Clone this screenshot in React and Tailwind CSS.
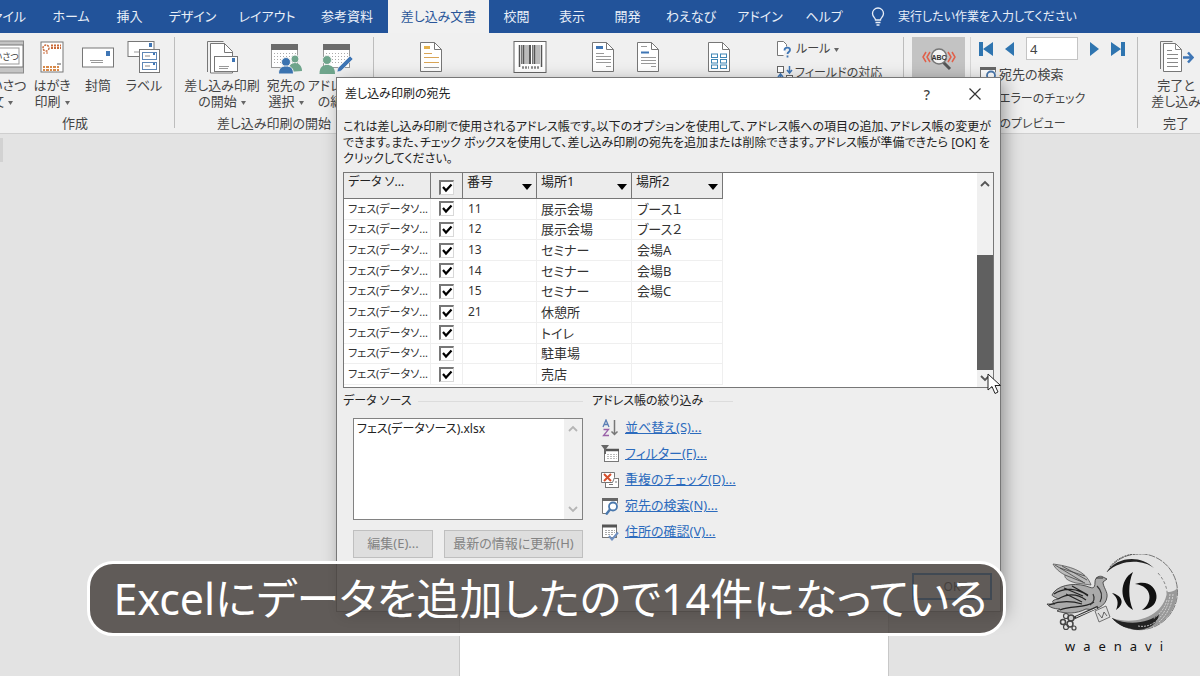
import React, { useState } from "react";

const tabs = [
  { label: "ファイル", width: "w-[40px]", align: "justify-end pr-[14px]" },
  { label: "ホーム", width: "w-[62px]" },
  { label: "挿入", width: "w-[55px]" },
  { label: "デザイン", width: "w-[71px]" },
  { label: "レイアウト", width: "w-[78px]" },
  { label: "参考資料", width: "w-[82px]" },
  { label: "差し込み文書", width: "w-[101px]", active: true },
  { label: "校閲", width: "w-[55px]" },
  { label: "表示", width: "w-[56px]" },
  { label: "開発", width: "w-[55px]" },
  { label: "わえなび", width: "w-[72px]" },
  { label: "アドイン", width: "w-[66px]" },
  { label: "ヘルプ", width: "w-[62px]" },
];

const initialRows = [
  { id: 1, number: "11", place1: "展示会場", place2: "ブース１" },
  { id: 2, number: "12", place1: "展示会場", place2: "ブース２" },
  { id: 3, number: "13", place1: "セミナー", place2: "会場A" },
  { id: 4, number: "14", place1: "セミナー", place2: "会場B" },
  { id: 5, number: "15", place1: "セミナー", place2: "会場C" },
  { id: 6, number: "21", place1: "休憩所", place2: "" },
  { id: 7, number: "", place1: "トイレ", place2: "" },
  { id: 8, number: "", place1: "駐車場", place2: "" },
  { id: 9, number: "", place1: "売店", place2: "" },
];

const Svg = ({ w, h, children }) => (
  <svg
    width={w}
    height={h}
    viewBox={`0 0 ${w} ${h}`}
    fill="none"
    className="shrink-0"
    aria-hidden="true"
  >
    {children}
  </svg>
);

const GreetingIcon = () => (
  <Svg w={44} h={34}>
    <rect x="0.5" y="1" width="43" height="32" fill="#c4c4c4" stroke="#8a8a8a" />
    <rect x="1" y="5" width="42" height="22" fill="#fff" stroke="#777" />
    <rect x="5" y="8" width="34" height="16" fill="#fff" stroke="#999" />
    <text x="5" y="20" fontSize="9" fill="#444">
      あいさつ
    </text>
  </Svg>
);

const PostcardIcon = () => (
  <Svg w={26} h={34}>
    <rect x="2" y="2" width="22" height="30" fill="#fff" stroke="#777" />
    <circle cx="7" cy="8" r="3" stroke="#c96a3a" strokeWidth="1.500" strokeDasharray="2 1" />
    <path d="M4 13h5" stroke="#c96a3a" strokeDasharray="2 1" />
    <path d="M12 5.500h10M12 8h10" stroke="#c96a3a" strokeWidth="2" strokeDasharray="2 1" />
    <path d="M18 24h4" stroke="#555" />
    <path d="M4 27h17M4 30h17" stroke="#d88a4a" strokeWidth="2" strokeDasharray="2 1 3 1" />
  </Svg>
);

const EnvelopeIcon = () => (
  <Svg w={34} h={34}>
    <rect x="1.500" y="8" width="31" height="19" fill="#fff" stroke="#777" />
    <rect x="25" y="11" width="4" height="5" fill="#3f76b5" />
    <path d="M9 20.500h13M10 22.500h12" stroke="#999" />
  </Svg>
);

const LabelIcon = () => (
  <Svg w={34} h={34}>
    <rect x="1" y="1.500" width="26" height="15" fill="#fff" stroke="#777" />
    <rect x="22" y="3" width="3" height="4" fill="#3f76b5" />
    <path d="M7 12h6" stroke="#999" />
    <rect x="12.500" y="9.500" width="20" height="23" fill="#fff" stroke="#777" />
    <rect x="15.500" y="12.500" width="14" height="7" stroke="#5d86b5" />
    <rect x="15.500" y="22.500" width="14" height="7" stroke="#5d86b5" />
    <path d="M18 16h5M18 26h5" stroke="#888" />
    <path d="M27 13v2M27 23v2" stroke="#3f76b5" strokeWidth="2" />
  </Svg>
);

const StartMergeIcon = () => (
  <Svg w={34} h={34}>
    <path d="M2.500 32V1.500h16" stroke="#777" />
    <path d="M5.500 33V3.500h14l8 8V33z" fill="#fff" stroke="#777" />
    <path d="M19.500 3.500v9h8" stroke="#777" />
    <rect x="9.500" y="16.500" width="23" height="15" fill="#fff" stroke="#777" />
    <rect x="27" y="18" width="3" height="4" fill="#3f76b5" />
    <path d="M14 26.500h10M14 28.500h9" stroke="#999" />
  </Svg>
);

const Sheet = ({ x = 2 }) => (
  <>
    <rect x={x + 0.5} y="4.500" width="26" height="23" fill="#fff" stroke="#999" />
    <rect x={x} y="4" width="27" height="6" fill="#6b6b6b" />
    <path
      d={`M${x + 3} 13.500h22M${x + 3} 16.500h22M${x + 3} 19.500h22M${x + 3} 22.500h22`}
      stroke="#aaa"
      strokeDasharray="1 2"
    />
  </>
);

const SelectRecipientsIcon = () => (
  <Svg w={34} h={34}>
    <Sheet x={2} />
    <circle cx="26" cy="19" r="4" fill="#6fa58c" stroke="#f0f0f0" />
    <path d="M19 32c0-6 3-9 7-9s7 3 7 8z" fill="#6fa58c" />
    <circle cx="17" cy="22" r="4.500" fill="#3b73b0" stroke="#f0f0f0" />
    <path d="M9.500 34c0-6 3-8 7.500-8s7.500 2 7.500 8z" fill="#3b73b0" stroke="#f0f0f0" />
  </Svg>
);

const EditRecipientsIcon = () => (
  <Svg w={36} h={34}>
    <Sheet x={4} />
    <circle cx="8" cy="20" r="4.500" fill="#6fa58c" stroke="#f0f0f0" />
    <path d="M0.500 34c0-7 3-9 7.500-9s8 2 8 9z" fill="#6fa58c" />
    <path d="M31 16l3 3-12 12-4 1 1-4z" fill="#3f76b5" stroke="#f0f0f0" strokeWidth="0.600" />
  </Svg>
);

const DocIcon = ({ children }) => (
  <Svg w={26} h={34}>
    <path d="M2.500 2.500h14l7 7v22h-21z" fill="#fff" stroke="#777" />
    <path d="M16.500 2.500v7h7" stroke="#777" />
    {children}
  </Svg>
);

const HighlightIcon = () => (
  <DocIcon>
    <path d="M6 7.500h6" stroke="#e5b24d" strokeWidth="3" />
    <path d="M6 13.500h8M6 17.500h15M6 22.500h15" stroke="#d9a557" />
    <path d="M6 27.500h15" stroke="#999" />
  </DocIcon>
);

const AddressBlockIcon = () => (
  <DocIcon>
    <path d="M6 7.500h7" stroke="#3f76b5" strokeWidth="3" />
    <path d="M6 13.500h8M6 16.500h15M6 19.500h15M6 22.500h15M16 26.500h5" stroke="#999" />
  </DocIcon>
);

const GreetingLineIcon = () => (
  <DocIcon>
    <path d="M6 12.500h8" stroke="#3f76b5" strokeWidth="2" />
    <path d="M6 6.500h6M6 17.500h15M6 20.500h15M6 23.500h15M16 26.500h5" stroke="#999" />
  </DocIcon>
);

const MergeFieldIcon = () => (
  <DocIcon>
    {[14, 19.5, 25].map((y) => (
      <g key={y} stroke="#3f86b5">
        <rect x="5.500" y={y} width="6" height="3.500" />
        <rect x="14.500" y={y} width="6" height="3.500" />
      </g>
    ))}
  </DocIcon>
);

const BarcodeIcon = () => (
  <Svg w={34} h={34}>
    <rect x="1" y="1.500" width="32" height="31" fill="#fff" stroke="#666" />
    <path d="M6.500 5v22M28.500 5v22" stroke="#555" strokeWidth="1.500" />
    <path d="M10.500 5v19M17 5v19M21.500 5v19" stroke="#555" strokeWidth="2" />
    <path d="M8.500 5v19M13 5v19M15 5v19M19.500 5v19M24 5v19M26 5v19" stroke="#777" />
    <path d="M9 27.500h7M18 27.500h8" stroke="#888" strokeWidth="2.500" strokeDasharray="2 1" />
  </Svg>
);

const RulesIcon = () => (
  <Svg w={16} h={18}>
    <path d="M7.500 15.500h-6v-14h6l3 3v2" fill="#fff" stroke="#777" />
    <path d="M8.500 10.500c0-4 5.500-3.500 5.500-.5 0 2-2.500 2-2.500 4M11.500 15.500v2" stroke="#3f76b5" strokeWidth="1.800" />
  </Svg>
);

const MatchFieldsIcon = () => (
  <Svg w={18} h={16}>
    <rect x="1.500" y="1.500" width="6" height="6" fill="#fff" stroke="#666" />
    <rect x="10.500" y="10.500" width="6" height="5" fill="#fff" stroke="#666" />
    <path d="M13.500 1v6M11 5l2.500 3L16 5M4.500 15v-5M2 12l2.500-3L7 12" stroke="#3f76b5" strokeWidth="1.500" />
  </Svg>
);

const PreviewIcon = () => (
  <Svg w={36} h={30}>
    <path d="M5 7l-3 5 3 5M9 7l-3 5 3 5M27 7l3 5-3 5M31 7l3 5-3 5" stroke="#e0604a" strokeWidth="1.500" />
    <path d="M22 17l7 7" stroke="#555" strokeWidth="3" />
    <circle cx="18" cy="11.500" r="7.500" fill="#f4f4f4" stroke="#777" strokeWidth="1.500" />
    <text x="10.500" y="15" fontSize="7" fontWeight="700" fill="#333" fontFamily="Liberation Sans">
      ABC
    </text>
  </Svg>
);

const FindIcon = () => (
  <Svg w={18} h={18}>
    <path d="M6 16.500H1.500v-14h15v4" fill="#fff" stroke="#777" />
    <path d="M1 2.500h16" stroke="#666" strokeWidth="3" />
    <circle cx="12" cy="9.500" r="4" fill="#fff" stroke="#4a78ad" strokeWidth="1.800" />
    <path d="M9 12.500l-4 5" stroke="#4a78ad" strokeWidth="2.500" />
  </Svg>
);

const FinishIcon = () => (
  <Svg w={36} h={34}>
    <path d="M2.500 29V1.500h12" stroke="#777" />
    <path d="M5.500 31.500v-28h12l6 6v22z" fill="#fff" stroke="#777" />
    <path d="M17.500 3.500v6h6M9 10.500h5M9 14.500h11M9 18.500h11M9 22.500h11M9 26.500h11" stroke="#888" />
    <path d="M25 17.500h9M30 12.500l4.500 5-4.500 5" stroke="#3f76b5" strokeWidth="2.500" />
  </Svg>
);

const SortIcon = () => (
  <Svg w={18} h={18}>
    <path d="M2 8l3-7 3 7M3 5.500h4" stroke="#5b7fb5" strokeWidth="1.300" />
    <path d="M2.500 10.500h5l-5 6h5.500" stroke="#9a62a8" strokeWidth="1.300" />
    <path d="M13.500 1v14M10.500 12.500l3 3 3-3" stroke="#777" strokeWidth="1.500" />
  </Svg>
);

const FilterIcon = () => (
  <Svg w={18} h={18}>
    <rect x="3.500" y="4.500" width="14" height="12" fill="#fff" stroke="#777" />
    <path d="M4 5h14" stroke="#555" strokeWidth="2.500" />
    <path d="M6 9.500h10M6 11.500h10M6 13.500h10" stroke="#bbb" strokeDasharray="2 1" />
    <path d="M0 0h8L5 4v5H3V4z" fill="#666" />
  </Svg>
);

const DuplicateIcon = () => (
  <Svg w={18} h={18}>
    <rect x="4.500" y="7.500" width="13" height="9" fill="#fff" stroke="#777" />
    <path d="M8 13.500h4M15 10v2" stroke="#777" />
    <path d="M.5 1.500h13v5l-2 5H.500z" fill="#fff" stroke="#777" />
    <path d="M3 3l7 7M10 3l-7 7" stroke="#d5502e" strokeWidth="2" />
  </Svg>
);

const ValidateIcon = () => (
  <Svg w={18} h={18}>
    <rect x="1.500" y="2.500" width="14" height="12" fill="#fff" stroke="#777" />
    <path d="M1 3h15" stroke="#555" strokeWidth="3" />
    <path d="M4 7.500h10M4 9.500h10M4 11.500h8" stroke="#aaa" strokeDasharray="2 1" />
    <path d="M8 13l3 3.500 6-7" stroke="#6e8fc0" strokeWidth="2" />
  </Svg>
);

const Chevron = ({ up, color = "#555" }) => (
  <Svg w={10} h={8}>
    <path d={up ? "M1 6l4-4 4 4" : "M1 2l4 4 4-4"} stroke={color} strokeWidth="1.800" />
  </Svg>
);

const Caret = () => (
  <svg width="5" height="4" viewBox="0 0 5 4" className="ml-1 inline-block align-middle" aria-hidden="true">
    <path d="M0 0h5L2.500 4z" fill="#666" />
  </svg>
);

const BigButton = ({ width, icon, lines = [], caret, label }) => (
  <button
    type="button"
    aria-label={label}
    className={`${width} flex shrink-0 flex-col items-center pt-[3px]`}
  >
    {icon}
    <span className="mt-[3px] text-[13px] leading-4 whitespace-nowrap">
      {lines.map((line, i) => (
        <span key={line} className="block">
          {line}
          {caret && i === lines.length - 1 && <Caret />}
        </span>
      ))}
    </span>
  </button>
);

const Group = ({ width, title, children }) => (
  <section className={`${width} flex shrink-0 flex-col border-r border-[#bdbdbd]`}>
    <div className="flex h-[78px] shrink-0">{children}</div>
    <div className="text-center text-[13px] leading-4 whitespace-nowrap">{title}</div>
  </section>
);

const Tick = ({ checked, onChange, label }) => (
  <label className="relative block size-[15px]">
    <input
      type="checkbox"
      checked={checked}
      onChange={onChange}
      aria-label={label}
      className="peer block size-[15px] appearance-none border border-t-2 border-l-2 border-[#d8d8d8] border-t-[#777] border-l-[#777] bg-white"
    />
    <svg
      width="11"
      height="11"
      viewBox="0 0 11 11"
      fill="none"
      className="pointer-events-none absolute top-[3px] left-[3px] hidden peer-checked:block"
      aria-hidden="true"
    >
      <path d="M1 4l3 3.500L9.500 1.500" stroke="#000" strokeWidth="2.200" />
    </svg>
  </label>
);

const filterLinks = [
  { text: "並べ替え(S)...", icon: <SortIcon /> },
  { text: "フィルター(F)...", icon: <FilterIcon /> },
  { text: "重複のチェック(D)...", icon: <DuplicateIcon /> },
  { text: "宛先の検索(N)...", icon: <FindIcon /> },
  { text: "住所の確認(V)...", icon: <ValidateIcon /> },
];

const TabBar = () => (
  <nav className="flex h-[33px] shrink-0 bg-[#22539a] text-[13px] text-[#e9eff8]">
    {tabs.map((tab) => (
      <button
        key={tab.label}
        type="button"
        className={`${tab.width} ${tab.align || "justify-center"} flex shrink-0 items-center whitespace-nowrap ${
          tab.active ? "bg-[#f1f1f1] text-[#2a5699]" : ""
        }`}
      >
        {tab.label}
      </button>
    ))}
    <button type="button" className="ml-4 flex shrink-0 items-center gap-[13px] text-[12px] whitespace-nowrap">
      <Svg w={14} h={20}>
        <path
          d="M4.500 13c0-2-3-3-3-6.500a5.500 5.500 0 0 1 11 0c0 3.500-3 4.500-3 6.500zM4.500 15.500h5M5.500 18h3"
          stroke="#e9eff8"
          strokeWidth="1.300"
        />
      </Svg>
      実行したい作業を入力してください
    </button>
  </nav>
);

const Ribbon = () => (
  <div className="flex h-[101px] shrink-0 overflow-hidden border-b border-[#cfcfcf] bg-[#f0f0f0] pt-1 pb-[5px] text-[#444]">
    <Group width="w-[175px]" title={<span className="pr-6">作成</span>}>
      <div className="flex min-w-0 flex-1 justify-end pr-[7px]">
        <BigButton width="w-[54px]" icon={<GreetingIcon />} lines={["あいさつ", "文"]} caret />
        <BigButton width="w-[46px]" icon={<PostcardIcon />} lines={["はがき", "印刷"]} caret />
        <BigButton width="w-[46px]" icon={<EnvelopeIcon />} lines={["封筒"]} />
        <BigButton width="w-[46px]" icon={<LabelIcon />} lines={["ラベル"]} />
      </div>
    </Group>
    <Group width="w-[199px]" title="差し込み印刷の開始">
      <div className="flex pl-[7px]">
        <BigButton width="w-[80px]" icon={<StartMergeIcon />} lines={["差し込み印刷", "の開始"]} caret />
        <BigButton width="w-[48px]" icon={<SelectRecipientsIcon />} lines={["宛先の", "選択"]} caret />
        <BigButton width="w-[54px]" icon={<EditRecipientsIcon />} lines={["アドレス帳", "の編集"]} />
      </div>
    </Group>
    <Group width="w-[530px]">
      <BigButton width="w-[114px]" icon={<HighlightIcon />} label="差し込みフィールドの強調表示" />
      <BigButton width="w-[84px]" icon={<BarcodeIcon />} label="バーコード" />
      <BigButton width="w-[62px]" icon={<AddressBlockIcon />} label="住所ブロック" />
      <BigButton width="w-[28px]" icon={<GreetingLineIcon />} label="挨拶文" />
      <BigButton width="w-[114px]" icon={<MergeFieldIcon />} label="差し込みフィールドの挿入" />
      <div className="flex flex-col text-[12px] whitespace-nowrap">
        <button type="button" className="flex h-6 items-center gap-1">
          <RulesIcon />
          <span>
            ルール
            <Caret />
          </span>
        </button>
        <button type="button" className="flex h-6 items-center gap-px">
          <MatchFieldsIcon />
          フィールドの対応
        </button>
      </div>
    </Group>
    <Group width="w-[234px]" title={<span className="text-[12px]">結果のプレビュー</span>}>
      <button
        type="button"
        aria-label="結果のプレビュー"
        className="ml-2 flex w-[53px] shrink-0 justify-center bg-[#c3c3c3] pt-2"
      >
        <PreviewIcon />
      </button>
      <div className="ml-[5px] flex flex-col border-l border-[#d4d4d4] pl-2 text-[12px] whitespace-nowrap">
        <div className="flex h-[23px] items-center gap-3">
          <button type="button" aria-label="先頭">
            <Svg w={14} h={14}>
              <path d="M0 0h4v14H0zM14 0v14L4 7z" fill="#2f75b0" />
            </Svg>
          </button>
          <button type="button" aria-label="前へ">
            <Svg w={9} h={14}>
              <path d="M9 0v14L0 7z" fill="#2f75b0" />
            </Svg>
          </button>
          <input
            type="text"
            defaultValue="4"
            aria-label="レコード"
            className="h-[23px] w-[52px] border border-[#c4c4c4] bg-white px-[3px] text-[13px]"
          />
          <button type="button" aria-label="次へ">
            <Svg w={9} h={14}>
              <path d="M0 0v14l9-7z" fill="#2f75b0" />
            </Svg>
          </button>
          <button type="button" aria-label="最後">
            <Svg w={14} h={14}>
              <path d="M10 0h4v14h-4zM0 0v14l10-7z" fill="#2f75b0" />
            </Svg>
          </button>
        </div>
        <button type="button" className="flex h-[26px] items-center gap-0.5 pt-1 text-[13px]">
          <FindIcon />
          宛先の検索
        </button>
        <button type="button" className="flex h-[26px] items-center pl-5">
          エラーのチェック
        </button>
      </div>
    </Group>
    <section className="flex flex-1 flex-col items-start pl-2">
      <div className="flex h-[78px] shrink-0">
        <BigButton width="w-[60px]" icon={<FinishIcon />} lines={["完了と", "差し込み"]} />
      </div>
      <div className="w-[60px] text-center text-[13px] leading-4">完了</div>
    </section>
  </div>
);

const HeaderCell = ({ children, width, arrow }) => (
  <th
    className={`${width} h-[26px] border-r border-b border-[#777] bg-[#ececec] px-1 text-left align-top font-normal`}
  >
    <div className="flex items-end justify-between">
      <span className="leading-[17px]">{children}</span>
      {arrow && (
        <svg width="10" height="6" viewBox="0 0 10 6" className="shrink-0" aria-hidden="true">
          <path d="M0 0h10L5 6z" fill="#000" />
        </svg>
      )}
    </div>
  </th>
);

const RecipientsTable = () => {
  const [checked, setChecked] = useState(initialRows.map(() => true));

  const toggle = (index) => {
    setChecked(checked.map((value, i) => (i === index ? !value : value)));
  };

  const toggleAll = (e) => {
    setChecked(checked.map(() => e.target.checked));
  };

  return (
    <div className="mt-[5px] flex h-[216px] border border-[#777] bg-white">
      <div className="flex-1">
        <table className="h-[212px] w-[379px] table-fixed border-separate border-spacing-0 text-[13px] leading-4 whitespace-nowrap">
          <thead>
            <tr>
              <HeaderCell width="w-[87px]">
                <span className="text-[12px]">データ ソ...</span>
              </HeaderCell>
              <th className="w-[32px] border-r border-b border-[#777] bg-[#ececec] pt-1 pl-2">
                <Tick
                  checked={checked.every(Boolean)}
                  onChange={toggleAll}
                  label="すべて選択"
                />
              </th>
              <HeaderCell width="w-[74px]" arrow>番号</HeaderCell>
              <HeaderCell width="w-[95px]" arrow>場所1</HeaderCell>
              <HeaderCell width="w-[91px]" arrow>場所2</HeaderCell>
            </tr>
          </thead>
          <tbody className="text-[#333]">
            {initialRows.map((row, i) => (
              <tr key={row.id}>
                <td className="border-r border-b border-[#efefef] pl-1 text-[11px]">フェス(データソ...</td>
                <td className="border-r border-b border-[#efefef] pl-2">
                  <Tick
                    checked={checked[i]}
                    onChange={() => toggle(i)}
                    label={row.place1}
                  />
                </td>
                <td className="border-r border-b border-[#efefef] pl-[5px] text-[12px]">{row.number}</td>
                <td className="border-r border-b border-[#efefef] pl-1">{row.place1}</td>
                <td className="border-r border-b border-[#efefef] pl-[5px]">{row.place2}</td>
              </tr>
            ))}
          </tbody>
        </table>
      </div>
      <div className="flex w-4 flex-col items-center bg-[#f0f0f0]">
        <div className="flex h-[82px] pt-[7px]">
          <Chevron up />
        </div>
        <div className="h-[115px] w-full bg-[#606060]" />
        <div className="pt-1">
          <Chevron />
        </div>
      </div>
    </div>
  );
};

const Dialog = () => (
  <div
    role="dialog"
    aria-labelledby="dialog-title"
    className="absolute top-[77px] left-[336px] flex h-[535px] w-[665px] flex-col border border-[#777] bg-[#eeeeee] text-[12px] text-[#222] shadow-[4px_4px_16px_rgba(0,0,0,0.35)]"
  >
    <div className="flex h-8 shrink-0 items-center bg-white pl-2">
      <h1 id="dialog-title" className="flex-1">
        差し込み印刷の宛先
      </h1>
      <button type="button" className="w-12 text-center text-[14px] font-medium text-[#444]">?</button>
      <button type="button" aria-label="閉じる" className="mr-[1px] flex w-12 justify-center">
        <Svg w={12} h={12}>
          <path d="M0.500 0.500l11 11M11.500 0.500l-11 11" stroke="#333" strokeWidth="1.200" />
        </Svg>
      </button>
    </div>
    <div className="flex flex-1 flex-col px-1.5 pt-[9px]">
      <p className="leading-4 whitespace-nowrap">
        これは差し込み印刷で使用されるアドレス帳です。以下のオプションを使用して、アドレス帳への項目の追加、アドレス帳の変更が
        <br />
        できます。また、チェック ボックスを使用して、差し込み印刷の宛先を追加または削除できます。アドレス帳が準備できたら [OK] を
        <br />
        クリックしてください。
      </p>
      <RecipientsTable />
      <div className="mt-1 flex gap-[9px]">
        <div className="w-[240px]">
          <div className="flex h-[18px] items-center gap-1.5">
            <h2>データ ソース</h2>
            <span className="h-px flex-1 bg-[#dcdcdc]" />
          </div>
          <div className="mt-2 ml-[10px] flex h-[102px] border border-[#828282] bg-white">
            <ul role="listbox" className="flex-1 pl-[3px] leading-5">
              <li role="option" aria-selected="false">フェス(データソース).xlsx</li>
            </ul>
            <div className="flex w-[18px] flex-col items-center justify-between bg-[#f0f0f0] py-1.5">
              <Chevron up color="#b5b5b5" />
              <Chevron color="#b5b5b5" />
            </div>
          </div>
          <div className="mt-[10px] ml-[10px] flex gap-[11px] text-[13px] text-[#838383]">
            <button type="button" disabled className="h-7 w-20 border border-[#bfbfbf] bg-[#dedede]">
              編集(E)...
            </button>
            <button type="button" disabled className="h-7 flex-1 border border-[#bfbfbf] bg-[#dedede] whitespace-nowrap">
              最新の情報に更新(H)
            </button>
          </div>
        </div>
        <div>
          <div className="flex h-[18px] items-center gap-1.5">
            <h2>アドレス帳の絞り込み</h2>
            <span className="h-px w-6 bg-[#dcdcdc]" />
          </div>
          <ul className="mt-[5px] ml-[9px] text-[13px]">
            {filterLinks.map((link) => (
              <li key={link.text} className="flex h-[26px] items-center gap-[6px]">
                {link.icon}
                <a href="#" className="whitespace-nowrap text-[#2c6bbd] underline">
                  {link.text}
                </a>
              </li>
            ))}
          </ul>
        </div>
      </div>
      <div className="mt-auto flex justify-end pr-[2px] pb-[11px]">
        <button type="button" className="h-[27px] w-20 border-2 border-[#0067c0] bg-[#e1e1e1]">
          OK
        </button>
      </div>
    </div>
    {/* mouse pointer resting on the scroll bar */}
    <svg
      width="15"
      height="22"
      viewBox="0 0 15 22"
      className="absolute top-[295px] left-[650px]"
      aria-hidden="true"
    >
      <path d="M1 1v16l4-3.500 3 7 3-1.500-3-6.500h5.500z" fill="#fff" stroke="#222" />
    </svg>
  </div>
);

const WaenaviLogo = () => (
  <div className="absolute right-[18px] bottom-[22px] flex w-[136px] flex-col items-center text-[#111]">
    <svg width="136" height="84" viewBox="0 0 136 84" fill="none" aria-hidden="true">
      {/* ring */}
      <path d="M61 18A38 38 0 1 1 66 64" stroke="#777" strokeWidth="1" strokeDasharray="7 1" />
      <path d="M61 18C70 3 94 0 108 14C98 6 76 4 61 18z" fill="#222" />
      <path d="M64 13C72 2 86 -1 96 0" stroke="#555" strokeDasharray="2 1" />
      <path d="M112 19c9 10 11 22 8 30" stroke="#888" strokeDasharray="3 2" />
      <path d="M66 64C90 72 118 62 121 38C127 38 130 36 131 34A38 38 0 0 1 66 64z" fill="#999" />
      <path d="M66 64C84 73 104 68 113 60C112 70 103 75 92 76C82 75 72 72 66 64z" fill="#222" />
      <path d="M124 40c-1 12-7 22-16 29M127 40c-1 12-7 22-14 28M121 46c-2 8-8 15-14 19M92 72c6 1 12 0 17-4" stroke="#ddd" strokeWidth="0.800" strokeDasharray="2 1" />
      {/* mark */}
      <path d="M87 18C73 26 73 48 87 56C82 45 82 29 87 18z" fill="#111" />
      <path d="M89 30C112 22 120 54 96 56C107 49 107 32 89 30z" fill="#111" />
      <path d="M66 39C77 42 79 50 70 56C73 49 72 44 66 39z" fill="#111" />
      {/* bird: far wing, near wing, tail, body and head */}
      <path d="M7 10C22 12 40 16 45 31L30 29C22 27 18 24 19 21C13 18 9 14 7 10z" fill="#bbb" stroke="#555" strokeWidth="0.800" />
      <path d="M9 11l28 17M14 14l25 8M19 21l20 8M16 12l25 14" stroke="#444" strokeWidth="0.800" />
      <path d="M6 41C10 32 26 28 40 32C46 34 49 36 49 28C49 23 54 21 57 23L61 25L57 28C57 33 62 38 61 43C60 52 50 57 40 55C30 60 20 60 11 57L14 55C8 55 3 53 1 50L9 50C5 48 6 46 12 45C9 43 6 42 6 41z" fill="#aaa" stroke="#333" strokeWidth="0.800" />
      <path d="M8 40C18 33 32 34 42 42M12 45C22 39 32 40 40 46M3 51C16 46 26 47 36 50M14 56C26 51 38 55 48 48M18 34l19 8M26 32l16 9M20 40l16 8" stroke="#222" strokeWidth="1.200" />
      <path d="M51 32c5 5 6 10 3 16M47 40c2 4 1 8-3 11M50 24h7" stroke="#333" strokeWidth="1.200" />
      {/* key */}
      <path d="M28 64L52 53" stroke="#333" strokeWidth="3" />
      <path d="M30 63L51 54" stroke="#ddd" strokeWidth="1" />
      <path d="M49 57l11-5 4 11-11 5z" fill="#ddd" stroke="#555" strokeWidth="0.800" />
      <path d="M52 59l4 5 2-6 3 4" stroke="#444" strokeWidth="0.800" />
      <circle cx="25" cy="64" r="3" fill="#ccc" stroke="#444" strokeWidth="1.500" />
      <circle cx="20" cy="62" r="2.500" stroke="#444" strokeWidth="1.200" />
      <circle cx="17" cy="68" r="2.500" stroke="#444" strokeWidth="1.500" />
      <circle cx="24" cy="70" r="3" stroke="#444" strokeWidth="1.500" />
      <circle cx="20" cy="73" r="2.500" stroke="#444" strokeWidth="1.200" />
      <circle cx="28" cy="74" r="2" stroke="#444" strokeWidth="1.200" />
    </svg>
    <div className="flex w-[98px] justify-between font-['Noto_Sans'] text-[13px] leading-4">
      {"waenavi".split("").map((letter, i) => (
        <span key={i}>{letter}</span>
      ))}
    </div>
  </div>
);

const App = () => {
  return (
    <div className="relative flex min-h-screen flex-col overflow-hidden bg-[#e3e3e3] font-['Noto_Sans','Noto_Sans_CJK_JP',sans-serif] [font-feature-settings:'palt']">
      <TabBar />
      <Ribbon />
      <main className="flex flex-1">
        <div className="mt-1 h-6 w-[3px] bg-[#d2d2d2]" />
        <div className="mt-8 ml-[456px] w-[430px] border-x border-[#c8c8c8] bg-white" />
      </main>
      <Dialog />
      <WaenaviLogo />
      <div className="absolute top-[561px] left-[87px] flex h-[75px] w-[919px] items-center justify-center rounded-[26px] border-[3px] border-white bg-[#4a4541]/86 pl-2 text-[43px] leading-none whitespace-nowrap text-white">
        Excelにデータを追加したので14件になっている
      </div>
    </div>
  );
};

export default App;
